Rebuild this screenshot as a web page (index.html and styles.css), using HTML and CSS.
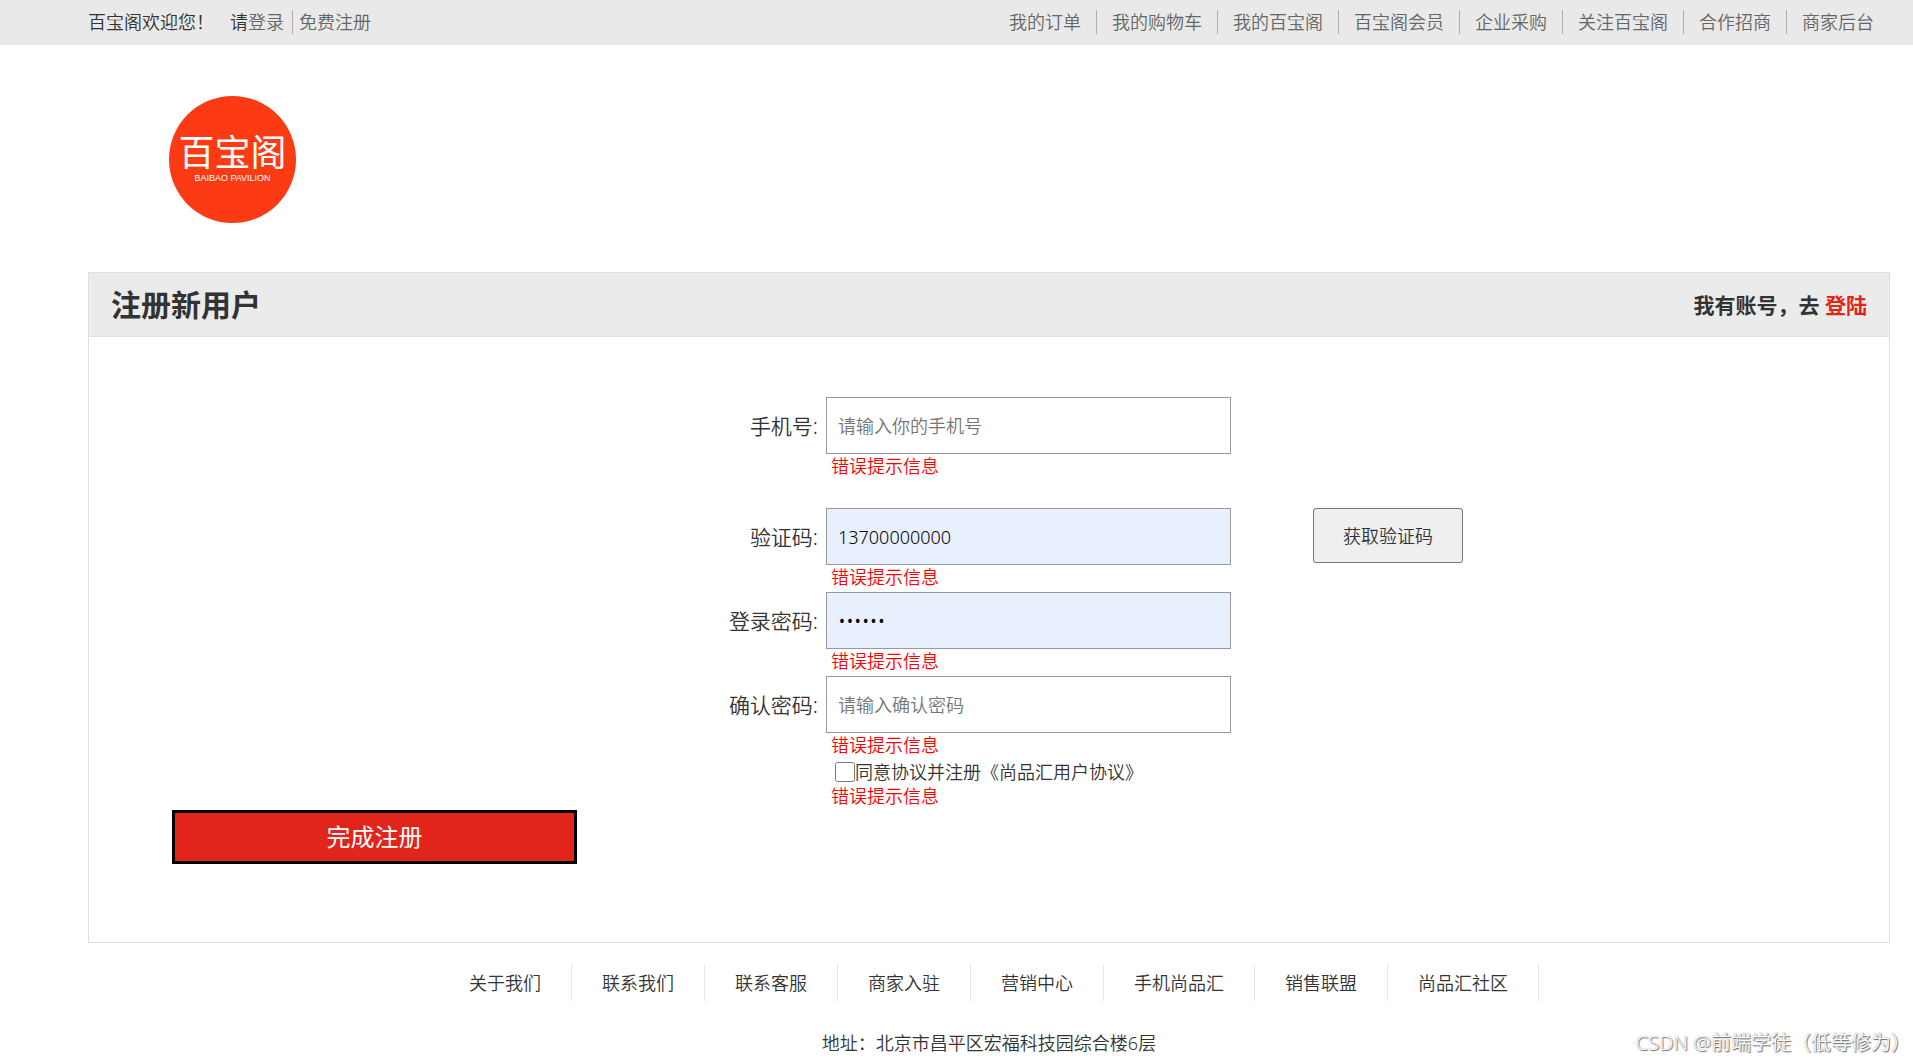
FILE: index.html
```html
<!DOCTYPE html>
<html lang="zh-CN">
<head>
<meta charset="utf-8">
<meta name="viewport" content="width=device-width, initial-scale=1">
<title>百宝阁 - 注册新用户</title>
<link rel="stylesheet" href="styles.css">
</head>
<body>
<nav class="topbar">
  <div class="welcome">
    <span class="greeting">百宝阁欢迎您！</span>
    <span>请<a href="#">登录</a></span>
    <a class="signup" href="#">免费注册</a>
  </div>
  <ul class="shortcuts">
    <li><a href="#">我的订单</a></li>
    <li><a href="#">我的购物车</a></li>
    <li><a href="#">我的百宝阁</a></li>
    <li><a href="#">百宝阁会员</a></li>
    <li><a href="#">企业采购</a></li>
    <li><a href="#">关注百宝阁</a></li>
    <li><a href="#">合作招商</a></li>
    <li><a href="#">商家后台</a></li>
  </ul>
</nav>

<header class="brand">
  <a class="logo" href="#">
    <span class="logo-name">百宝阁</span>
    <span class="logo-sub">BAIBAO PAVILION</span>
  </a>
</header>

<main class="card">
  <div class="card-head">
    <h1>注册新用户</h1>
    <p>我有账号，去 <a href="#">登陆</a></p>
  </div>
  <form class="form">
    <div class="row row-phone">
      <label for="phone">手机号:</label>
      <input class="field" id="phone" type="text" placeholder="请输入你的手机号">
      <span class="error">错误提示信息</span>
    </div>
    <div class="row">
      <label for="code">验证码:</label>
      <input class="field filled" id="code" type="text" value="13700000000">
      <button class="get-code" type="button">获取验证码</button>
      <span class="error">错误提示信息</span>
    </div>
    <div class="row">
      <label for="pwd">登录密码:</label>
      <input class="field filled secret" id="pwd" type="password" value="123456">
      <span class="error">错误提示信息</span>
    </div>
    <div class="row">
      <label for="pwd2">确认密码:</label>
      <input class="field" id="pwd2" type="password" placeholder="请输入确认密码">
      <span class="error">错误提示信息</span>
    </div>
    <div class="row row-agree">
      <div class="agree">
        <input id="agree" type="checkbox">
        <label for="agree">同意协议并注册《尚品汇用户协议》</label>
      </div>
      <span class="error">错误提示信息</span>
    </div>
    <button class="submit" type="submit">完成注册</button>
  </form>
</main>

<footer class="footer">
  <ul class="links">
    <li><a href="#">关于我们</a></li>
    <li><a href="#">联系我们</a></li>
    <li><a href="#">联系客服</a></li>
    <li><a href="#">商家入驻</a></li>
    <li><a href="#">营销中心</a></li>
    <li><a href="#">手机尚品汇</a></li>
    <li><a href="#">销售联盟</a></li>
    <li><a href="#">尚品汇社区</a></li>
  </ul>
  <address>地址：北京市昌平区宏福科技园综合楼6层</address>
</footer>
<div class="watermark">CSDN @前端学徒（低等修为）</div>
</body>
</html>
```
FILE: styles.css
```css
* {
  box-sizing: border-box;
}

body {
  position: relative;
  margin: 0;
  background: #fff;
  color: #333;
  font: 350 18px/24px "Noto Sans", "Noto Sans CJK SC", sans-serif;
}

h1, p, ul {
  margin: 0;
  padding: 0;
}

ul {
  display: flex;
  list-style: none;
}

a {
  color: inherit;
  text-decoration: none;
}

input, button {
  font: inherit;
}

/* top bar */
.topbar {
  display: flex;
  align-items: center;
  justify-content: space-between;
  height: 45px;
  padding: 0 24px 1px 88px;
  background: #e9e9e9;
}

.topbar a {
  color: #666;
}

.welcome {
  display: flex;
}

.greeting {
  margin-right: 16px;
}

.welcome .signup {
  margin-left: 8px;
  padding-left: 6px;
  border-left: 1px solid #b3aeae;
}

.shortcuts li {
  padding: 0 15px;
}

.shortcuts li + li {
  border-left: 1px solid #b3aeae;
}

/* logo */
.brand {
  padding: 51px 23px 49px 169px;
}

.logo {
  display: flex;
  flex-direction: column;
  align-items: center;
  width: 127px;
  height: 127px;
  padding-top: 37px;
  border-radius: 50%;
  background: #fc3a14;
  color: #fff;
  white-space: nowrap;
}

.logo-name {
  font-size: 36px;
  font-weight: 400;
  line-height: 40px;
}

.logo-sub {
  font: 9px/10px "Liberation Sans", sans-serif;
}

/* registration card */
.card {
  margin: 0 23px 0 88px;
  border: 1px solid #dfdfdf;
}

.card-head {
  display: flex;
  align-items: center;
  justify-content: space-between;
  height: 64px;
  padding: 0 22px;
  border-bottom: 1px solid #dfdfdf;
  background: #ebebeb;
  font-weight: 700;
}

.card-head h1 {
  font-size: 30px;
  line-height: 40px;
}

.card-head p {
  font-size: 21px;
}

.card-head a {
  color: #e1251b;
}

.form {
  padding: 60px 0 78px;
}

.row {
  display: grid;
  grid-template-columns: calc(50% - 163px) 405px 1fr;
  margin-bottom: 3px;
}

.row-phone {
  margin-bottom: 30px;
}

.row-agree {
  margin-bottom: 2px;
}

.row > label {
  align-self: center;
  padding-right: 8px;
  font-size: 21px;
  text-align: right;
}

.field {
  height: 57px;
  padding: 0 11px;
  border: 1px solid #999;
  border-radius: 0;
  background: #fff;
  color: #000;
  outline: none;
}

.field::placeholder {
  color: #757575;
}

.field.filled {
  background: #e8f0fe;
}

.field.secret {
  font-size: 21px;
}

.error {
  grid-column: 2;
  padding-left: 5px;
  color: #f00;
}

.get-code {
  width: 150px;
  height: 55px;
  margin-left: 82px;
  border: 1px solid #767676;
  border-radius: 3px;
  background: #efefef;
  color: #333;
}

.agree {
  grid-column: 2;
  display: flex;
  align-items: center;
  padding-left: 9px;
}

.agree input {
  width: 20px;
  height: 20px;
  margin: 0;
}

.submit {
  display: block;
  width: 405px;
  height: 54px;
  margin-left: 83px;
  border: 3px solid #000;
  background: #e1251b;
  color: #fff;
  font-size: 24px;
  font-weight: 400;
}

/* footer */
.footer {
  padding: 22px 23px 7px 88px;
}

.links {
  justify-content: center;
}

.links li {
  padding: 6px 30px;
  border-right: 1px solid #e4e4e4;
}

.footer address {
  margin-top: 30px;
  font-style: normal;
  text-align: center;
}

.watermark {
  position: absolute;
  right: 2px;
  bottom: 7px;
  color: #fff;
  font-size: 20px;
  text-shadow: 1px 1px 1px #666, 0 0 1px #888;
}
```
